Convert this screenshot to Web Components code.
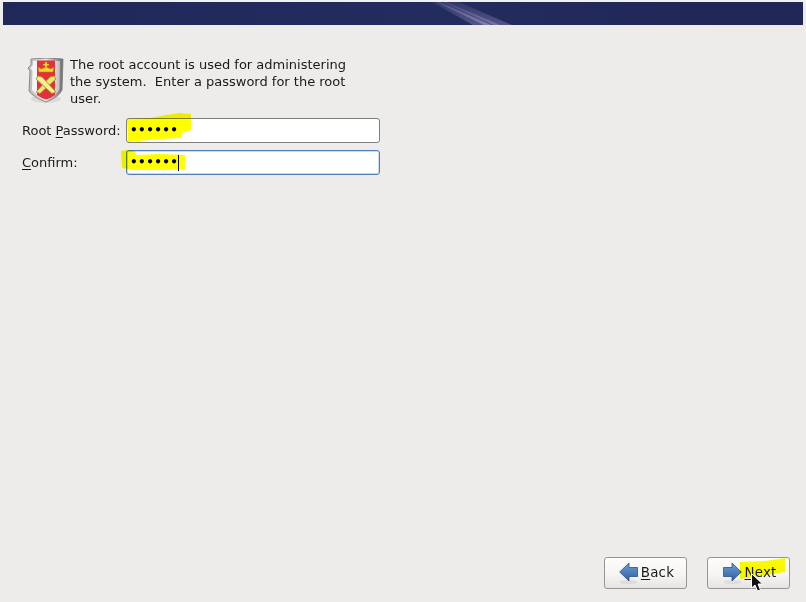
<!DOCTYPE html>
<html>
<head>
<meta charset="utf-8">
<style>
    html, body { margin: 0; height: 100%; background: #edecea; }
    body { font: 13px "DejaVu Sans", sans-serif; color: #1a1a1a; overflow: hidden; }
</style>
</head>
<body>
<install-window>
    <install-banner slot="banner"></install-banner>
    <install-intro>The root account is used for administering the system.&nbsp; Enter a password for the root user.</install-intro>
    <password-form></password-form>
    <nav-button slot="nav" kind="back" key="B" rest="ack"></nav-button>
    <nav-button slot="nav" kind="next" key="N" rest="ext"></nav-button>
</install-window>

<script>
class InstallWindow extends HTMLElement {
    constructor() {
        super();
        this.attachShadow({ mode: 'open' });
        this.shadowRoot.innerHTML = /*html*/`
<style>
    :host { display: flex; flex-direction: column; width: 806px; height: 602px; box-sizing: border-box; position: relative; }
    .top { padding: 2px 3px 0; background: linear-gradient(#f2f1ef 2px, transparent 2px); }
    main { flex: 1; padding: 31px 22px 0; display: flex; flex-direction: column; }
    footer { display: flex; justify-content: flex-end; gap: 20px; padding: 0 16px 13px 0; }
    svg.marks { position: absolute; left: 0; top: 0; mix-blend-mode: multiply; pointer-events: none; }
    svg.cursor { position: absolute; left: 751px; top: 573px; }
</style>
<div class="top"><slot name="banner"></slot></div>
<main><slot></slot></main>
<footer><slot name="nav"></slot></footer>
<!-- highlighter strokes from the annotated screenshot -->
<svg class="marks" width="806" height="602" fill="#ffff00">
    <path d="M127 119 L150 118 L166 115 L180 113 L191 114 L191 130 L182 133 L181 138 L160 139 L128 142 Z"/>
    <path d="M121 151 L127 150 L135 151 L136 155 L160 154 L185 155 L185 169 L170 170 L135 170 L122 168 Z"/>
    <path d="M740 562 L765 561 L785 558 L785 572 L765 575 L740 579 Z"/>
</svg>
<svg class="cursor" width="16" height="20" viewBox="0 0 16 20">
    <path d="M0.5 0.5 L0.5 15 L4 12 L6.5 18 L9.5 17 L7 11 L11.5 11 Z" fill="#111" stroke="#fff" stroke-width="1"/>
</svg>`;
    }
}

class InstallBanner extends HTMLElement {
    constructor() {
        super();
        this.attachShadow({ mode: 'open' });
        this.shadowRoot.innerHTML = /*html*/`
<style>
    :host { display: block; height: 23px; background: #20275a; overflow: hidden; }
    svg { display: block; }
</style>
<svg width="800" height="23">
    <defs>
        <linearGradient id="b" x1="0" x2="1">
            <stop offset="0" stop-color="#1f2859"/>
            <stop offset=".55" stop-color="#232c5e"/>
            <stop offset="1" stop-color="#202655"/>
        </linearGradient>
        <linearGradient id="s" x1="0" x2="0" y1="0" y2="1">
            <stop offset="0" stop-color="#8b82b4" stop-opacity=".25"/>
            <stop offset="1" stop-color="#8b82b4" stop-opacity=".85"/>
        </linearGradient>
    </defs>
    <rect width="800" height="23" fill="url(#b)"/>
    <path d="M429 0 L456 0 L509 23 L470 23 Z" fill="url(#s)" opacity=".55"/>
    <path d="M433 0 L437 0 L488 23 L481 23 Z" fill="url(#s)"/>
    <path d="M440 0 L443 0 L497 23 L491 23 Z" fill="url(#s)" opacity=".8"/>
</svg>`;
    }
}

class InstallIntro extends HTMLElement {
    constructor() {
        super();
        this.attachShadow({ mode: 'open' });
        this.shadowRoot.innerHTML = /*html*/`
<style>
    :host { display: flex; gap: 6px; align-items: flex-start; height: 62px; }
    svg { flex: none; margin: 2px 0 0 5px; }
    p { margin: 0; width: 285px; line-height: 17px; }
</style>
<svg width="37" height="46" viewBox="0 0 37 46">
    <defs>
        <linearGradient id="m" x1="0" x2="1">
            <stop offset="0" stop-color="#b9b9b9"/>
            <stop offset=".5" stop-color="#e4e4e4"/>
            <stop offset="1" stop-color="#6d6d6d"/>
        </linearGradient>
        <linearGradient id="w" x1="0" x2="1">
            <stop offset="0" stop-color="#f6f6f6"/>
            <stop offset=".7" stop-color="#efefef"/>
            <stop offset="1" stop-color="#bdbdbd"/>
        </linearGradient>
    </defs>
    <ellipse cx="19" cy="41" rx="15" ry="4" fill="#000" opacity=".08"/>
    <path d="M4 1 Q20 -1 36 1 L35 32 Q32 39 19 44 Q6 39 2 33 L3 13 L1 10 L4 7 Z" fill="url(#m)" stroke="#777" stroke-width=".8"/>
    <path d="M6 3 Q20 2 33 3 L32.5 31 Q30 37 19 41.5 Q9 37 5 32 L5.5 13 L3.5 10 L6 7 Z" fill="url(#w)"/>
    <path d="M10 2.5 L28 2.5 L28 37 Q24 40 19 41.5 Q14 40 10 37 Z" fill="#e4303a"/>
    <path d="M18 4 h2 v2 h2 v1.5 h-2 v3 h-2 v-3 h-2 v-1.5 h2 Z" fill="#f7dc3a" stroke="#a8861a" stroke-width=".4"/>
    <path d="M11 9 L14 11 L19 9 L24 11 L27 9 L26 14 L12 14 Z" fill="#f5d732" stroke="#a88b18" stroke-width=".6"/>
    <path d="M9 34 L13 35.5 L29 21 L27 18 L23 19 Z" fill="#efe47a" stroke="#a69426" stroke-width=".9"/>
    <path d="M29 34 L25 35.5 L9 21 L11 18 L15 19 Z" fill="#f6ee92" stroke="#a69426" stroke-width=".9"/>
</svg>
<p><slot></slot></p>`;
    }
}

class PasswordForm extends HTMLElement {
    constructor() {
        super();
        this.attachShadow({ mode: 'open' });
        this.shadowRoot.innerHTML = /*html*/`
<style>
    :host { display: grid; grid-template-columns: 104px 254px; row-gap: 7px; align-items: center; }
    label { line-height: 17px; }
    u { text-underline-offset: 2px; }
    .entry {
        box-sizing: border-box; height: 25px; padding: 0 3px; background: #fff;
        border: 1px solid #7f7f7c; border-radius: 3px; line-height: 23px;
        display: flex; align-items: center; color: #000;
    }
    .entry.focus { border-color: #4f7fb5; box-shadow: inset 0 0 0 1px #c9daef; }
    .dots { letter-spacing: .4px; font-size: 12px; font-weight: bold; }
    .caret { width: 1px; height: 16px; background: #000; }
</style>
<label>Root <u>P</u>assword:</label>
<div class="entry"><span class="dots">••••••</span></div>
<label><u>C</u>onfirm:</label>
<div class="entry focus"><span class="dots">••••••</span><span class="caret"></span></div>`;
    }
}

class NavButton extends HTMLElement {
    constructor() {
        super();
        this.attachShadow({ mode: 'open' });
        const back = this.getAttribute('kind') === 'back';
        const arrow = back
            ? 'M.7 10 L10 1 L10 5.5 L18.5 5.5 L18.5 14.5 L10 14.5 L10 19 Z'
            : 'M18.3 10 L9 1 L9 5.5 L.5 5.5 L.5 14.5 L9 14.5 L9 19 Z';
        this.shadowRoot.innerHTML = /*html*/`
<style>
    :host {
        display: flex; align-items: center; justify-content: center; gap: 3px;
        box-sizing: border-box; width: 83px; height: 32px; padding-left: 2px;
        background: linear-gradient(#fdfdfc, #f6f5f4 55%, #e5e4e2);
        border: 1px solid #99958f; border-radius: 3px; color: #1a1a1a;
        font-size: 13.4px; letter-spacing: .2px;
    }
    svg { flex: none; }
    span { margin-top: -1px; }
    u { text-underline-offset: 2px; }
</style>
<svg width="19" height="22" viewBox="0 0 19 22">
    <defs>
        <linearGradient id="a" x1="0" x2="0" y1="0" y2="1">
            <stop offset="0" stop-color="#6f9fd6"/>
            <stop offset="1" stop-color="#2d5f9e"/>
        </linearGradient>
    </defs>
    <ellipse cx="9.5" cy="20" rx="9" ry="2" fill="#000" opacity=".06"/>
    <path d="${arrow}" fill="url(#a)" stroke="#2a5288" stroke-width=".8"/>
</svg>
<span><u>${this.getAttribute('key')}</u>${this.getAttribute('rest')}</span>`;
    }
}

customElements.define('install-window', InstallWindow);
customElements.define('install-banner', InstallBanner);
customElements.define('install-intro', InstallIntro);
customElements.define('password-form', PasswordForm);
customElements.define('nav-button', NavButton);
</script>
</body>
</html>
